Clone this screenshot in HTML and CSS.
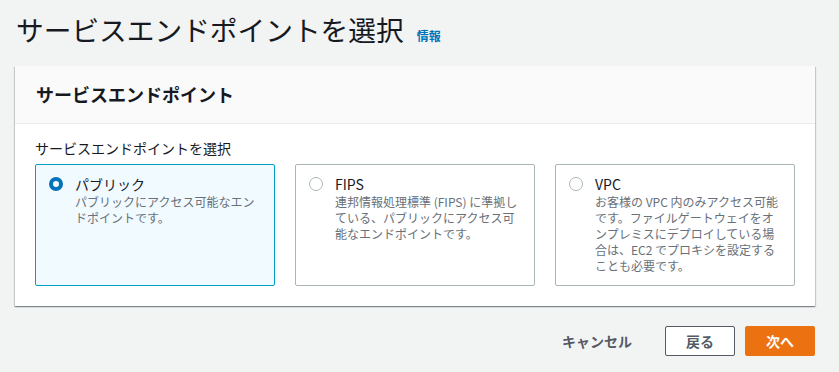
FILE: index.html
```html
<!DOCTYPE html>
<html lang="ja">
<head>
    <meta charset="UTF-8">
    <meta name="viewport" content="width=device-width, initial-scale=1.0">
    <title>サービスエンドポイントを選択</title>
    <link rel="stylesheet" href="styles.css">
</head>
<body>

<div class="page">
    <div class="page-header">
        <h1>サービスエンドポイントを選択</h1>
        <a class="info-link" href="#">情報</a>
    </div>

    <div class="panel">
        <div class="panel-header">
            <h2>サービスエンドポイント</h2>
        </div>
        <div class="panel-body">
            <div class="field-label">サービスエンドポイントを選択</div>
            <div class="tiles">
                <label class="tile selected">
                    <span class="radio"></span>
                    <span class="tile-text">
                        <span class="tile-title">パブリック</span>
                        <span class="tile-desc">パブリックにアクセス可能なエンドポイントです。</span>
                    </span>
                </label>
                <label class="tile">
                    <span class="radio"></span>
                    <span class="tile-text">
                        <span class="tile-title">FIPS</span>
                        <span class="tile-desc">連邦情報処理標準 (FIPS) に準拠している、パブリックにアクセス可能なエンドポイントです。</span>
                    </span>
                </label>
                <label class="tile">
                    <span class="radio"></span>
                    <span class="tile-text">
                        <span class="tile-title">VPC</span>
                        <span class="tile-desc">お客様の VPC 内のみアクセス可能です。ファイルゲートウェイをオンプレミスにデプロイしている場合は、EC2 でプロキシを設定することも必要です。</span>
                    </span>
                </label>
            </div>
        </div>
    </div>

    <div class="actions">
        <button class="btn-link">キャンセル</button>
        <button class="btn-normal">戻る</button>
        <button class="btn-primary">次へ</button>
    </div>
</div>

</body>
</html>
```

FILE: styles.css
```css
body {
    font-family: "Noto Sans CJK JP", "Noto Sans", sans-serif;
    margin: 0;
    background-color: #f2f3f3;
    color: #16191f;
}
.page {
    width: 800px;
    padding: 11px 0 0 15px;
}
.page-header {
    display: flex;
    align-items: baseline;
    height: 37px;
    margin-bottom: 18px;
}
h1 {
    margin: 0 0 0 1px;
    font-size: 27.7px;
    font-weight: 400;
    line-height: 37px;
}
.info-link {
    margin-left: 13px;
    font-size: 12px;
    font-weight: 700;
    color: #0073bb;
    text-decoration: none;
}
.panel {
    background-color: #fff;
    box-shadow: 0 1px 1px 0 rgba(0, 28, 36, 0.3), 1px 1px 1px 0 rgba(0, 28, 36, 0.15), -1px 1px 1px 0 rgba(0, 28, 36, 0.15);
}
.panel-header {
    background-color: #fafafa;
    border-bottom: 1px solid #eaeded;
    padding: 0 21px;
}
h2 {
    margin: 0;
    font-size: 18px;
    font-weight: 700;
    line-height: 57px;
}
.panel-body {
    padding: 14px 20px 20px;
}
.field-label {
    font-size: 14px;
    line-height: 20px;
    margin-bottom: 6px;
}
.tiles {
    display: grid;
    grid-template-columns: repeat(3, 240px);
    gap: 20px;
}
.tile {
    display: flex;
    gap: 12px;
    height: 122px;
    box-sizing: border-box;
    padding: 9px 14px 0 13px;
    border: 1px solid #aab7b8;
    border-radius: 2px;
    background-color: #fff;
    cursor: pointer;
}
.tile.selected {
    border-color: #00a1c9;
    background-color: #f1faff;
}
.radio {
    flex: none;
    width: 14px;
    height: 14px;
    margin-top: 3px;
    box-sizing: border-box;
    border: 1px solid #aab7b8;
    border-radius: 50%;
    background-color: #fff;
}
.tile.selected .radio {
    border: 4px solid #0073bb;
}
.tile-text {
    display: flex;
    flex-direction: column;
}
.tile-title {
    font-size: 14px;
    line-height: 20px;
}
.tile-desc {
    font-size: 12px;
    line-height: 16px;
    color: #687078;
}
.actions {
    display: flex;
    justify-content: flex-end;
    align-items: center;
    gap: 10px;
    margin-top: 20px;
}
button {
    font-family: inherit;
    font-size: 14px;
    font-weight: 700;
    line-height: 20px;
    padding: 4px 20px;
    border-radius: 2px;
    cursor: pointer;
}
.btn-link {
    background: none;
    border: 1px solid transparent;
    color: #545b64;
    padding: 4px 22px;
}
.btn-normal {
    background-color: #fff;
    border: 1px solid #545b64;
    color: #545b64;
}
.btn-primary {
    background-color: #ec7211;
    border: 1px solid #ec7211;
    color: #fff;
}
```
